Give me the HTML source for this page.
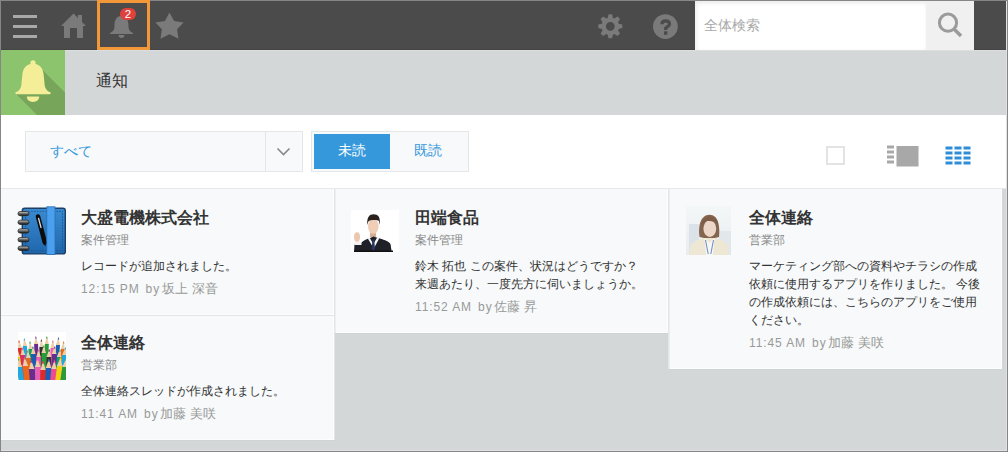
<!DOCTYPE html>
<html lang="ja">
<head>
<meta charset="utf-8">
<style>
*{box-sizing:border-box;margin:0;padding:0}
html,body{width:1008px;height:452px;overflow:hidden;background:#d4d7d8;font-family:"Liberation Sans",sans-serif;}
.abs{position:absolute}
#frame{position:absolute;left:0;top:0;width:1008px;height:452px;border:1px solid #868686;pointer-events:none;z-index:50}
#header{position:absolute;left:0;top:0;width:1006px;height:50px;background:#4b4b4b}
#band{position:absolute;left:0;top:50px;width:1008px;height:65px;background:#d4d7d8}
#toolbar{position:absolute;left:0;top:115px;width:1008px;height:74px;background:#fff;border-bottom:1px solid #e6e9ea}
.card{position:absolute;background:#f7f9fa;box-shadow:inset -1px -1px 0 #fcfdfd}
.card .t{position:absolute;left:80px;font-size:16px;font-weight:bold;color:#333;line-height:20px;white-space:nowrap}
.card .s{position:absolute;left:80px;font-size:12px;color:#888;line-height:16px;white-space:nowrap}
.card .b{position:absolute;left:80px;font-size:12px;color:#333;line-height:18px;width:232px}
.card .tm{letter-spacing:0.9px}
.card .by{margin-left:6px;letter-spacing:1px;margin-right:-2px}
.card .nm{font-size:12.6px;letter-spacing:0.2px;word-spacing:0px}
.card .m{position:absolute;left:80px;font-size:12px;color:#999;line-height:16px;white-space:nowrap}
</style>
</head>
<body>
<div id="header">
  <svg class="abs" style="left:0;top:0" width="1008" height="50" viewBox="0 0 1008 50">
    <rect x="13" y="15" width="24" height="3" fill="#a8a8a8"/>
    <rect x="13" y="25" width="24" height="3" fill="#a8a8a8"/>
    <rect x="13" y="35" width="24" height="3" fill="#a8a8a8"/>
    <path d="M73.5,13.6 L86,26 L83,26 L83,38 L77,38 L77,28 L70,28 L70,38 L64,38 L64,26 L61,26 Z M78,15 L82,15 L82,22 L78,18 Z" fill="#7a7a7a"/>
    <path d="M169.5,12.6 L174.1,20.9 L183.6,22.6 L177.1,29.3 L178.5,38.7 L169.5,34.3 L160.5,38.7 L161.9,29.3 L155.4,22.6 L164.9,20.9 Z" fill="#7a7a7a"/>
    <path d="M121.5,16 C116,16 114.5,21 114.5,26 C114.5,30 113,31.5 110,33 L110,34 L133,34 L133,33 C130,31.5 128.5,30 128.5,26 C128.5,21 127,16 121.5,16 Z M118.5,35 L124.5,35 C124.5,37 123,38 121.5,38 C120,38 118.5,37 118.5,35 Z" fill="#7a7a7a"/>
    <rect x="98.5" y="1.5" width="50" height="47" fill="none" stroke="#f29838" stroke-width="3"/>
    <rect x="120" y="8" width="16" height="12" rx="6" fill="#e0413b"/>
    <text x="128" y="18" font-size="11.5" fill="#fff" text-anchor="middle" font-family="Liberation Sans">2</text>
    <path d="M607.70,17.89 L608.50,14.33 L612.10,14.33 L612.90,17.89 L614.41,18.52 L617.49,16.57 L620.03,19.11 L618.08,22.19 L618.71,23.70 L622.27,24.50 L622.27,28.10 L618.71,28.90 L618.08,30.41 L620.03,33.49 L617.49,36.03 L614.41,34.08 L612.90,34.71 L612.10,38.27 L608.50,38.27 L607.70,34.71 L606.19,34.08 L603.11,36.03 L600.57,33.49 L602.52,30.41 L601.89,28.90 L598.33,28.10 L598.33,24.50 L601.89,23.70 L602.52,22.19 L600.57,19.11 L603.11,16.57 L606.19,18.52Z M614.7,26.3 A4.4,4.4 0 1 0 605.9,26.3 A4.4,4.4 0 1 0 614.7,26.3 Z" fill="#7a7a7a" fill-rule="evenodd"/>
    <circle cx="665.4" cy="26.6" r="12.4" fill="#7a7a7a"/>
    <path d="M661.9,24.3 C661.9,21.7 663.6,20.8 665.7,20.8 C668.1,20.8 669.5,22.1 669.5,23.9 C669.5,26 667.3,26.5 665.7,28 L665.7,30" fill="none" stroke="#4b4b4b" stroke-width="3.2"/><rect x="664" y="31.3" width="3.4" height="3.4" fill="#4b4b4b"/>
  </svg>
  <div class="abs" style="left:695px;top:1px;width:231px;height:49px;background:#fff;box-shadow:inset 1px 2px 4px rgba(0,0,0,0.09)"></div>
  <div class="abs" style="left:704px;top:15px;font-size:14px;color:#a9a9a9;line-height:20px">全体検索</div>
  <div class="abs" style="left:926px;top:1px;width:48px;height:49px;background:#f0f0f0"></div>
  <svg class="abs" style="left:926px;top:0" width="48" height="50" viewBox="926 0 48 50">
    <circle cx="948" cy="22.7" r="8.6" fill="none" stroke="#9b9b9b" stroke-width="3"/>
    <path d="M954,29 L961,36" stroke="#9b9b9b" stroke-width="3.5"/>
  </svg>
</div>
<div id="band">
  <svg class="abs" style="left:1px;top:0" width="64" height="65" viewBox="0 0 64 65">
    <rect width="64" height="65" fill="#8cc46e"/>
    <path d="M42,20.5 L64,42.5 L64,65 L36,65 L14.5,43.5 Z" fill="#77a65a"/>
    <circle cx="32" cy="12.8" r="2.6" fill="#f3ee97"/>
    <path d="M32,13.8 C25.5,13.8 22,18 21.3,25 L20.4,34.5 C20,38.8 17.8,41 14.8,42.3 C13.9,42.8 14.2,44.3 15.6,44.3 L48.4,44.3 C49.8,44.3 50.1,42.8 49.2,42.3 C46.2,41 44,38.8 43.6,34.5 L42.7,25 C42,18 38.5,13.8 32,13.8 Z" fill="#f3ee97"/>
    <path d="M25.8,46.6 L38.2,46.6 C38.2,50 35.5,52 32,52 C28.5,52 25.8,50 25.8,46.6 Z" fill="#f3ee97"/>
  </svg>
  <div class="abs" style="left:96px;top:20px;font-size:16px;color:#333;line-height:22px">通知</div>
</div>
<div id="toolbar">
  <div class="abs" style="left:25px;top:16px;width:278px;height:41px;background:#f7f9fa;border:1px solid #e3e7e8"></div>
  <div class="abs" style="left:265px;top:17px;width:1px;height:39px;background:#e3e7e8"></div>
  <div class="abs" style="left:50px;top:27px;font-size:14px;color:#3498db;line-height:18px">すべて</div>
  <svg class="abs" style="left:276px;top:32px" width="16" height="10" viewBox="0 0 16 10"><path d="M1.5,1.5 L7.5,7.5 L13.5,1.5" fill="none" stroke="#888" stroke-width="1.6"/></svg>
  <div class="abs" style="left:311px;top:16px;width:158px;height:41px;background:#f7f9fa;border:1px solid #e3e7e8"></div>
  <div class="abs" style="left:314px;top:19px;width:76px;height:35px;background:#3498db"></div>
  <div class="abs" style="left:338px;top:26px;font-size:14px;color:#fff;line-height:18px">未読</div>
  <div class="abs" style="left:414px;top:26px;font-size:14px;color:#3498db;line-height:18px">既読</div>
  <div class="abs" style="left:826px;top:31px;width:19px;height:19px;background:#fff;border:2px solid #e3e3e3"></div>
  <svg class="abs" style="left:880px;top:25px" width="45" height="30" viewBox="880 140 45 30">
    <rect x="887" y="145.5" width="7" height="3" fill="#a8a8a8"/>
    <rect x="887" y="150.5" width="7" height="3" fill="#a8a8a8"/>
    <rect x="887" y="155.5" width="7" height="3" fill="#a8a8a8"/>
    <rect x="887" y="160.5" width="7" height="3" fill="#a8a8a8"/>
    <rect x="896.5" y="146" width="22" height="20.5" fill="#a8a8a8"/>
  </svg>
  <svg class="abs" style="left:940px;top:25px" width="40" height="30" viewBox="940 140 40 30">
    <g fill="#2e8dd6">
    <rect x="945.5" y="146.5" width="7" height="3"/><rect x="954.5" y="146.5" width="7" height="3"/><rect x="963.5" y="146.5" width="7" height="3"/>
    <rect x="945.5" y="151.5" width="7" height="3"/><rect x="954.5" y="151.5" width="7" height="3"/><rect x="963.5" y="151.5" width="7" height="3"/>
    <rect x="945.5" y="156.5" width="7" height="3"/><rect x="954.5" y="156.5" width="7" height="3"/><rect x="963.5" y="156.5" width="7" height="3"/>
    <rect x="945.5" y="161.5" width="7" height="3"/><rect x="954.5" y="161.5" width="7" height="3"/><rect x="963.5" y="161.5" width="7" height="3"/>
    </g>
  </svg>
</div>
<svg class="abs" style="left:14px;top:203px;z-index:5" width="56" height="56" viewBox="0 0 56 56">
  <defs>
   <linearGradient id="bk" x1="0" y1="0" x2="0" y2="1"><stop offset="0" stop-color="#3a8bd2"/><stop offset="1" stop-color="#1f66ab"/></linearGradient>
   <linearGradient id="ring" x1="0" y1="0" x2="0" y2="1"><stop offset="0" stop-color="#e8e8e8"/><stop offset="0.4" stop-color="#777"/><stop offset="1" stop-color="#111"/></linearGradient>
  </defs>
  <rect x="8.3" y="5.3" width="43" height="45.6" rx="2.5" fill="url(#bk)" stroke="#1b3f66" stroke-width="1.4"/>
  <rect x="11.5" y="8.3" width="37" height="39.5" fill="none" stroke="#17508a" stroke-width="0.8" stroke-dasharray="1.6,1.2"/>
  <rect x="4" y="8.5" width="11" height="4.2" rx="2.1" fill="url(#ring)" stroke="#222" stroke-width="0.8"/><rect x="4" y="17.2" width="11" height="4.2" rx="2.1" fill="url(#ring)" stroke="#222" stroke-width="0.8"/><rect x="4" y="25.9" width="11" height="4.2" rx="2.1" fill="url(#ring)" stroke="#222" stroke-width="0.8"/><rect x="4" y="34.6" width="11" height="4.2" rx="2.1" fill="url(#ring)" stroke="#222" stroke-width="0.8"/><rect x="4" y="43.2" width="11" height="4.2" rx="2.1" fill="url(#ring)" stroke="#222" stroke-width="0.8"/>
  <path d="M24,13.5 L30.8,39.5" stroke="#0c0c0c" stroke-width="4.6" stroke-linecap="round"/><path d="M29.6,41 L31.5,43.5 L31.6,40" fill="#0c0c0c"/>
  <path d="M24.6,15.5 L27,24.5" stroke="#fff" stroke-width="1.3" stroke-linecap="round" opacity="0.85"/>
  <rect x="32.8" y="3.8" width="8.2" height="47.6" fill="#4aa0ee" stroke="#2a6fb0" stroke-width="0.8"/>
</svg>
<div class="card" style="left:1px;top:189px;width:333px;height:126px">
  <div class="t" style="top:19px">大盛電機株式会社</div>
  <div class="s" style="top:43px">案件管理</div>
  <div class="b" style="top:68px">レコードが追加されました。</div>
  <div class="m" style="top:92px"><span class="tm">12:15 PM</span><span class="by">by</span> <span class="nm">坂上 深音</span></div>
</div>
<div class="card" style="left:1px;top:316px;width:333px;height:124px">
  <div class="t" style="top:17px">全体連絡</div>
  <div class="s" style="top:41px">営業部</div>
  <div class="b" style="top:66px">全体連絡スレッドが作成されました。</div>
  <div class="m" style="top:90px"><span class="tm">11:41 AM</span><span class="by">by</span> <span class="nm">加藤 美咲</span></div>
</div>
<div class="card" style="left:335px;top:189px;width:333px;height:144px">
  <div class="t" style="top:19px">田端食品</div>
  <div class="s" style="top:43px">案件管理</div>
  <div class="b" style="top:68px">鈴木 拓也 この案件、状況はどうですか？<br>来週あたり、一度先方に伺いましょうか。</div>
  <div class="m" style="top:110px"><span class="tm">11:52 AM</span><span class="by">by</span> <span class="nm">佐藤 昇</span></div>
</div>
<div class="card" style="left:669px;top:189px;width:333px;height:180px">
  <div class="t" style="top:19px">全体連絡</div>
  <div class="s" style="top:43px">営業部</div>
  <div class="b" style="top:68px">マーケティング部への資料やチラシの作成依頼に使用するアプリを作りました。 今後の作成依頼には、こちらのアプリをご使用ください。</div>
  <div class="m" style="top:146px"><span class="tm">11:45 AM</span><span class="by">by</span> <span class="nm">加藤 美咲</span></div>
</div>
<svg class="abs" style="left:18px;top:332px;z-index:5" width="48" height="48" viewBox="0 0 48 48"><rect width="48" height="48" fill="#fff"/><path d="M3.0,49 L-0.2,16.0 L3.8,16.0 L7.0,49 Z" fill="#e02a2a"/><path d="M-0.2,16.0 Q-0.2,15.0 0.1,14.8 L1.0,8.0 L3.5,14.8 Q3.8,15.0 3.8,16.0 Z" fill="#ebcfa6"/><path d="M0.2,10.6 L1.0,8.0 L1.8,10.6 Z" fill="#e02a2a"/><path d="M7.5,49 L4.9,14.0 L8.9,14.0 L11.5,49 Z" fill="#1fa9e1"/><path d="M4.9,14.0 Q4.9,13.0 5.2,12.8 L6.3,6.0 L8.6,12.8 Q8.9,13.0 8.9,14.0 Z" fill="#ebcfa6"/><path d="M5.5,8.6 L6.3,6.0 L7.1,8.6 Z" fill="#1fa9e1"/><path d="M12.0,49 L10.4,17.0 L14.4,17.0 L16.0,49 Z" fill="#17a05a"/><path d="M10.4,17.0 Q10.4,16.0 10.7,15.8 L12.0,9.0 L14.0,15.8 Q14.4,16.0 14.4,17.0 Z" fill="#ebcfa6"/><path d="M11.2,11.6 L12.0,9.0 L12.8,11.6 Z" fill="#17a05a"/><path d="M17.0,49 L16.1,12.0 L20.1,12.0 L21.0,49 Z" fill="#6b2d8c"/><path d="M16.1,12.0 Q16.1,11.0 16.4,10.8 L17.9,4.0 L19.7,10.8 Q20.1,11.0 20.1,12.0 Z" fill="#ebcfa6"/><path d="M17.1,6.6 L17.9,4.0 L18.7,6.6 Z" fill="#6b2d8c"/><path d="M21.5,49 L21.4,15.0 L25.4,15.0 L25.5,49 Z" fill="#333"/><path d="M21.4,15.0 Q21.4,14.0 21.7,13.8 L23.4,7.0 L25.1,13.8 Q25.4,14.0 25.4,15.0 Z" fill="#ebcfa6"/><path d="M22.6,9.6 L23.4,7.0 L24.2,9.6 Z" fill="#333"/><path d="M26.0,49 L26.8,12.0 L30.8,12.0 L30.0,49 Z" fill="#2a9a3b"/><path d="M26.8,12.0 Q26.8,11.0 27.1,10.8 L28.9,4.0 L30.4,10.8 Q30.8,11.0 30.8,12.0 Z" fill="#ebcfa6"/><path d="M28.1,6.6 L28.9,4.0 L29.7,6.6 Z" fill="#2a9a3b"/><path d="M31.0,49 L32.5,16.0 L36.5,16.0 L35.0,49 Z" fill="#e95db3"/><path d="M32.5,16.0 Q32.5,15.0 32.8,14.8 L34.9,8.0 L36.2,14.8 Q36.5,15.0 36.5,16.0 Z" fill="#ebcfa6"/><path d="M34.1,10.6 L34.9,8.0 L35.7,10.6 Z" fill="#e95db3"/><path d="M35.5,49 L38.0,13.0 L42.0,13.0 L39.5,49 Z" fill="#1d5cb2"/><path d="M38.0,13.0 Q38.0,12.0 38.3,11.8 L40.5,5.0 L41.7,11.8 Q42.0,12.0 42.0,13.0 Z" fill="#ebcfa6"/><path d="M39.7,7.6 L40.5,5.0 L41.3,7.6 Z" fill="#1d5cb2"/><path d="M40.0,49 L42.9,17.0 L46.9,17.0 L44.0,49 Z" fill="#e8681c"/><path d="M42.9,17.0 Q42.9,16.0 43.3,15.8 L45.7,9.0 L46.6,15.8 Q46.9,16.0 46.9,17.0 Z" fill="#ebcfa6"/><path d="M44.9,11.6 L45.7,9.0 L46.5,11.6 Z" fill="#e8681c"/><path d="M44.0,49 L47.3,20.0 L51.3,20.0 L48.0,49 Z" fill="#d62f6a"/><path d="M47.3,20.0 Q47.3,19.0 47.6,18.8 L50.2,12.0 L50.9,18.8 Q51.3,19.0 51.3,20.0 Z" fill="#ebcfa6"/><path d="M49.4,14.6 L50.2,12.0 L51.0,14.6 Z" fill="#d62f6a"/><path d="M0.8,49 L-2.3,25.0 L2.2,25.0 L5.2,49 Z" fill="#f4cf12"/><path d="M-2.3,25.0 Q-2.3,24.0 -2.0,23.8 L-1.1,17.0 L1.8,23.8 Q2.2,24.0 2.2,25.0 Z" fill="#ebcfa6"/><path d="M-2.0,19.6 L-1.1,17.0 L-0.2,19.6 Z" fill="#f4cf12"/><path d="M5.2,49 L2.6,23.0 L7.1,23.0 L9.8,49 Z" fill="#d62f6a"/><path d="M2.6,23.0 Q2.6,22.0 3.0,21.8 L4.1,15.0 L6.8,21.8 Q7.1,22.0 7.1,23.0 Z" fill="#ebcfa6"/><path d="M3.2,17.6 L4.1,15.0 L5.0,17.6 Z" fill="#d62f6a"/><path d="M9.8,49 L8.1,26.0 L12.6,26.0 L14.2,49 Z" fill="#e8681c"/><path d="M8.1,26.0 Q8.1,25.0 8.4,24.8 L9.7,18.0 L12.2,24.8 Q12.6,25.0 12.6,26.0 Z" fill="#ebcfa6"/><path d="M8.8,20.6 L9.7,18.0 L10.6,20.6 Z" fill="#e8681c"/><path d="M14.2,49 L13.0,22.0 L17.5,22.0 L18.8,49 Z" fill="#1d5cb2"/><path d="M13.0,22.0 Q13.0,21.0 13.4,20.8 L14.9,14.0 L17.2,20.8 Q17.5,21.0 17.5,22.0 Z" fill="#ebcfa6"/><path d="M14.0,16.6 L14.9,14.0 L15.8,16.6 Z" fill="#1d5cb2"/><path d="M18.8,49 L18.3,25.0 L22.8,25.0 L23.2,49 Z" fill="#e95db3"/><path d="M18.3,25.0 Q18.3,24.0 18.7,23.8 L20.4,17.0 L22.4,23.8 Q22.8,24.0 22.8,25.0 Z" fill="#ebcfa6"/><path d="M19.5,19.6 L20.4,17.0 L21.3,19.6 Z" fill="#e95db3"/><path d="M23.2,49 L23.5,21.0 L28.0,21.0 L27.8,49 Z" fill="#2a9a3b"/><path d="M23.5,21.0 Q23.5,20.0 23.9,19.8 L25.8,13.0 L27.6,19.8 Q28.0,20.0 28.0,21.0 Z" fill="#ebcfa6"/><path d="M24.9,15.6 L25.8,13.0 L26.7,15.6 Z" fill="#2a9a3b"/><path d="M27.8,49 L28.6,25.0 L33.1,25.0 L32.2,49 Z" fill="#333"/><path d="M28.6,25.0 Q28.6,24.0 29.0,23.8 L31.2,17.0 L32.8,23.8 Q33.1,24.0 33.1,25.0 Z" fill="#ebcfa6"/><path d="M30.3,19.6 L31.2,17.0 L32.1,19.6 Z" fill="#333"/><path d="M32.2,49 L34.0,22.0 L38.5,22.0 L36.8,49 Z" fill="#6b2d8c"/><path d="M34.0,22.0 Q34.0,21.0 34.3,20.8 L36.8,14.0 L38.1,20.8 Q38.5,21.0 38.5,22.0 Z" fill="#ebcfa6"/><path d="M35.9,16.6 L36.8,14.0 L37.6,16.6 Z" fill="#6b2d8c"/><path d="M36.8,49 L39.0,25.0 L43.5,25.0 L41.2,49 Z" fill="#17a05a"/><path d="M39.0,25.0 Q39.0,24.0 39.3,23.8 L41.9,17.0 L43.1,23.8 Q43.5,24.0 43.5,25.0 Z" fill="#ebcfa6"/><path d="M41.0,19.6 L41.9,17.0 L42.8,19.6 Z" fill="#17a05a"/><path d="M41.2,49 L44.4,23.0 L48.9,23.0 L45.8,49 Z" fill="#1fa9e1"/><path d="M44.4,23.0 Q44.4,22.0 44.7,21.8 L47.6,15.0 L48.5,21.8 Q48.9,22.0 48.9,23.0 Z" fill="#ebcfa6"/><path d="M46.7,17.6 L47.6,15.0 L48.5,17.6 Z" fill="#1fa9e1"/><path d="M44.8,49 L48.0,26.0 L52.5,26.0 L49.2,49 Z" fill="#e02a2a"/><path d="M48.0,26.0 Q48.0,25.0 48.3,24.8 L51.4,18.0 L52.1,24.8 Q52.5,25.0 52.5,26.0 Z" fill="#ebcfa6"/><path d="M50.5,20.6 L51.4,18.0 L52.3,20.6 Z" fill="#e02a2a"/><path d="M0.8,49 L-1.3,35.0 L4.2,35.0 L6.2,49 Z" fill="#1fa9e1"/><path d="M-1.3,35.0 Q-1.3,34.0 -0.9,33.8 L0.1,26.0 L3.8,33.8 Q4.2,34.0 4.2,35.0 Z" fill="#ebcfa6"/><path d="M-1.0,28.6 L0.1,26.0 L1.2,28.6 Z" fill="#1fa9e1"/><path d="M6.2,49 L4.6,34.0 L10.1,34.0 L11.8,49 Z" fill="#e8681c"/><path d="M4.6,34.0 Q4.6,33.0 5.1,32.8 L6.4,25.0 L9.7,32.8 Q10.1,33.0 10.1,34.0 Z" fill="#ebcfa6"/><path d="M5.3,27.6 L6.4,25.0 L7.5,27.6 Z" fill="#e8681c"/><path d="M11.8,49 L10.9,37.0 L16.4,37.0 L17.2,49 Z" fill="#6b2d8c"/><path d="M10.9,37.0 Q10.9,36.0 11.4,35.8 L13.1,28.0 L16.0,35.8 Q16.4,36.0 16.4,37.0 Z" fill="#ebcfa6"/><path d="M12.0,30.6 L13.1,28.0 L14.2,30.6 Z" fill="#6b2d8c"/><path d="M17.2,49 L16.9,35.0 L22.4,35.0 L22.8,49 Z" fill="#e95db3"/><path d="M16.9,35.0 Q16.9,34.0 17.3,33.8 L19.3,26.0 L21.9,33.8 Q22.4,34.0 22.4,35.0 Z" fill="#ebcfa6"/><path d="M18.2,28.6 L19.3,26.0 L20.4,28.6 Z" fill="#e95db3"/><path d="M22.2,49 L22.3,38.0 L27.8,38.0 L27.8,49 Z" fill="#e02a2a"/><path d="M22.3,38.0 Q22.3,37.0 22.8,36.8 L25.1,29.0 L27.4,36.8 Q27.8,37.0 27.8,38.0 Z" fill="#ebcfa6"/><path d="M24.0,31.6 L25.1,29.0 L26.2,31.6 Z" fill="#e02a2a"/><path d="M27.2,49 L27.8,36.0 L33.3,36.0 L32.8,49 Z" fill="#1d5cb2"/><path d="M27.8,36.0 Q27.8,35.0 28.2,34.8 L30.9,27.0 L32.9,34.8 Q33.3,35.0 33.3,36.0 Z" fill="#ebcfa6"/><path d="M29.8,29.6 L30.9,27.0 L32.0,29.6 Z" fill="#1d5cb2"/><path d="M32.2,49 L33.2,37.0 L38.7,37.0 L37.8,49 Z" fill="#f04b92"/><path d="M33.2,37.0 Q33.2,36.0 33.6,35.8 L36.6,28.0 L38.3,35.8 Q38.7,36.0 38.7,37.0 Z" fill="#ebcfa6"/><path d="M35.5,30.6 L36.6,28.0 L37.8,30.6 Z" fill="#f04b92"/><path d="M37.2,49 L39.0,34.0 L44.5,34.0 L42.8,49 Z" fill="#f4cf12"/><path d="M39.0,34.0 Q39.0,33.0 39.4,32.8 L42.7,25.0 L44.0,32.8 Q44.5,33.0 44.5,34.0 Z" fill="#ebcfa6"/><path d="M41.6,27.6 L42.7,25.0 L43.8,27.6 Z" fill="#f4cf12"/><path d="M42.2,49 L44.4,35.0 L49.9,35.0 L47.8,49 Z" fill="#2a9a3b"/><path d="M44.4,35.0 Q44.4,34.0 44.8,33.8 L48.5,26.0 L49.4,33.8 Q49.9,34.0 49.9,35.0 Z" fill="#ebcfa6"/><path d="M47.4,28.6 L48.5,26.0 L49.6,28.6 Z" fill="#2a9a3b"/></svg>
<svg class="abs" style="left:351px;top:210px;z-index:5" width="48" height="42" viewBox="0 0 48 42">
 <rect width="48" height="42" fill="#fff"/>
 <g transform="translate(-1.5,0)">
 <rect x="20.5" y="20" width="6" height="7" fill="#d9ad90"/>
 <ellipse cx="23.8" cy="16.4" rx="5.3" ry="7.4" fill="#efcdb6"/>
 <path d="M17.8,15 C17.2,7 20,4.2 24,4.2 C28.5,4.2 31.2,6.8 30.2,15 L29.4,11 C27.5,9.6 21,9.6 18.8,11.5 Z" fill="#2b221d"/>
 </g>
 <path d="M9,42 L10,33 C13,30 16,29 19,28 L22.5,26.5 L27,28 C32,29.5 37,30.5 39.5,34 L40.5,40.5 L40.5,42 Z" fill="#1e2228"/>
 <path d="M18.5,27.5 L22.3,34 L26.2,27.5 L28.2,28.5 L22.8,38.5 L16.8,28.5 Z" fill="#f6f6f6"/>
 <path d="M21.5,29.5 L23.2,29.5 L24,39 L22.3,41 L20.7,39 Z" fill="#2a3660"/>
 <path d="M3,42 L3.5,34.5 L10.5,34.5 L13,37 L15,42 Z" fill="#1e2228"/>
 <rect x="3.5" y="31.5" width="7" height="3.5" fill="#f3f3f3"/>
 <ellipse cx="6" cy="27" rx="3" ry="4.8" fill="#ecc7ae"/>
 <rect x="3" y="40.5" width="39" height="1.5" fill="#111"/>
</svg>
<svg class="abs" style="left:686px;top:206px;z-index:5" width="45" height="49" viewBox="0 0 45 49">
 <defs><linearGradient id="wbg" x1="0" y1="0" x2="0" y2="1"><stop offset="0" stop-color="#f4f7f8"/><stop offset="1" stop-color="#e8edf0"/></linearGradient></defs>
 <rect width="45" height="49" fill="url(#wbg)"/>
 <rect x="3" y="18" width="10" height="31" fill="#dce3e8"/>
 <rect x="33" y="25" width="12" height="24" fill="#e1e7eb"/>
 <path d="M13.5,31 C12,21 14,9 23.5,8.8 C32.5,9 34,20 33,31 L29,32 L18,32 Z" fill="#86654f"/>
 <ellipse cx="23.8" cy="22.6" rx="6.4" ry="8.4" fill="#ecd6c8"/>
 <path d="M15.5,20 C16,13 20,10.5 24,10.5 C29,10.5 31.5,14 32,19 C29,15 24,14.5 19,15.5 Z" fill="#7d5c48"/>
 <path d="M3,49 L4.5,38.5 C8.5,35 13.5,33.5 18,32 L29.5,32 C34,33.5 38.5,35 41.5,38.5 L43,49 Z" fill="#ede7d3"/>
 <path d="M18.5,32 L23.5,37 L28.5,32 L27,49 L20,49 Z" fill="#f7f7f5"/>
 <path d="M19.5,34 L22.2,48 M27.5,34 L24.8,48" stroke="#7290c6" stroke-width="1.1"/>
</svg>
<div class="abs" style="left:334px;top:189px;width:1px;height:251px;background:#e3e6e8"></div>
<div class="abs" style="left:668px;top:189px;width:1px;height:180px;background:#e3e6e8"></div>
<div class="abs" style="left:335px;top:189px;width:1px;height:144px;background:#eceff0;z-index:3"></div>
<div class="abs" style="left:669px;top:189px;width:1px;height:180px;background:#eceff0;z-index:3"></div>
<div class="abs" style="left:669px;top:369px;width:333px;height:1px;background:#d0d3d4"></div>
<div class="abs" style="left:335px;top:333px;width:333px;height:1px;background:#d0d3d4"></div>
<div class="abs" style="left:1px;top:440px;width:333px;height:1px;background:#d0d3d4"></div>
<div class="abs" style="left:1px;top:315px;width:333px;height:1px;background:#e3e6e8"></div>
<div class="abs" style="left:97px;top:0;width:53px;height:1px;background:#f29838;z-index:51"></div>
<div class="abs" style="left:1px;top:49px;width:96px;height:1px;background:#444;z-index:2"></div><div class="abs" style="left:150px;top:49px;width:545px;height:1px;background:#444;z-index:2"></div><div class="abs" style="left:974px;top:49px;width:32px;height:1px;background:#444;z-index:2"></div>
<div class="abs" style="left:65px;top:50px;width:941px;height:1px;background:#dcdfe0;z-index:2"></div>
<div id="frame"></div>
<div class="abs" style="left:1006px;top:0;width:1px;height:452px;background:#e0e2e3;z-index:49"></div>
<div class="abs" style="left:1px;top:450px;width:1006px;height:1px;background:#e0e2e3;z-index:49"></div>
</body>
</html>
